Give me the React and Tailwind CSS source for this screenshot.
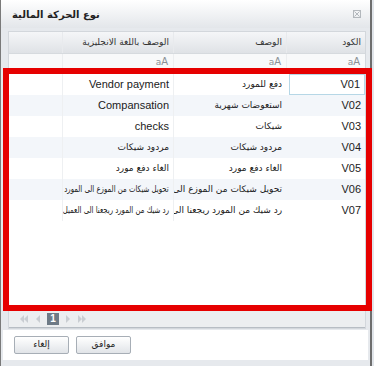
import React from "react";

const rows = [
  { code: "V01", ar: "دفع للمورد", en: "Vendor payment" },
  { code: "V02", ar: "استعوضات شهرية", en: "Compansation" },
  { code: "V03", ar: "شيكات", en: "checks" },
  { code: "V04", ar: "مردود شيكات", en: "مردود شيكات" },
  { code: "V05", ar: "الغاء دفع مورد", en: "الغاء دفع مورد" },
  { code: "V06", ar: "تحويل شيكات من الموزع الى المورد", en: "تحويل شيكات من الموزع الى المورد", long: true },
  { code: "V07", ar: "رد شيك من المورد ريجعنا الى العميل", en: "رد شيك من المورد ريجعنا الى العميل", long: true },
];

const isLatin = (s) => /^[A-Za-z ]+$/.test(s);

function FilterIcon() {
  return (
    <span className="text-[9px] leading-none text-[#8a8f96] font-['DejaVu_Sans',sans-serif]" dir="ltr">
      a<span className="text-[10px]">A</span>
    </span>
  );
}

function Cell({ text, w, squeeze = false }) {
  const latin = isLatin(text);
  return (
    <div className={`${w} h-full flex items-center justify-start pr-[4px] border-l border-[#eef0f2] overflow-hidden whitespace-nowrap`}>
      {latin ? (
        <span className="text-[11px] text-[#1a1a1a] font-['Liberation_Sans',sans-serif]">{text}</span>
      ) : squeeze ? (
        <span className="inline-block shrink-0 text-[9px] text-[#1a1a1a] origin-right scale-x-[0.77]">{text}</span>
      ) : (
        <span className="text-[9px] text-[#1a1a1a]">{text}</span>
      )}
    </div>
  );
}

export default function App() {
  return (
    <div className="w-[374px] h-[366px] bg-[#e1e5ea] overflow-hidden relative font-['DejaVu_Sans',sans-serif]">
      <div className="w-[372px] h-[366px] border-l border-l-[#7a7a7a] border-r-2 border-r-[#6e6e6e] bg-[#e6e9ed] flex flex-col">
        {/* title bar */}
        <div className="h-[28px] shrink-0 bg-gradient-to-b from-white to-[#e3e6ea] flex items-center justify-between pl-[11px] pr-[9px]">
          <span className="text-[10px] font-bold text-[#222]" dir="rtl">نوع الحركة المالية</span>
          <svg width="8" height="8" viewBox="0 0 8 8" className="opacity-70">
            <rect x="0.5" y="0.5" width="7" height="7" fill="none" stroke="#9aa0a6" strokeWidth="1" />
            <path d="M1.5 1.5 L6.5 6.5 M6.5 1.5 L1.5 6.5" stroke="#9aa0a6" strokeWidth="1" />
          </svg>
        </div>
        {/* body */}
        <div className="flex-1 flex flex-col pl-[7px] pr-[4px] pt-[3px]">
          <div className="h-[298px] border border-[#d3d7dc] bg-white flex flex-col" dir="rtl">
            {/* header */}
            <div className="h-[22px] shrink-0 flex bg-gradient-to-b from-[#f5f6f8] to-[#dfe2e6] border-b border-[#d6dade] text-[9px] text-[#333]">
              <div className="w-[79px] flex items-center pr-[4px] border-l border-[#e8eaed]">الكود</div>
              <div className="w-[113px] flex items-center pr-[4px] border-l border-[#e8eaed]">الوصف</div>
              <div className="w-[111px] flex items-center pr-[4px] border-l border-[#e8eaed]">الوصف باللغة الانجليزية</div>
              <div className="flex-1"></div>
            </div>
            {/* filter row */}
            <div className="h-[17px] shrink-0 flex bg-[#f8f9fa] border-b border-[#e3e6e9]">
              <div className="w-[79px] flex items-center pr-[5px] border-l border-[#eceef0]"><FilterIcon /></div>
              <div className="w-[113px] flex items-center pr-[5px] border-l border-[#eceef0]"><FilterIcon /></div>
              <div className="w-[111px] flex items-center pr-[5px] border-l border-[#eceef0]"><FilterIcon /></div>
              <div className="flex-1"></div>
            </div>
            {/* rows */}
            <div className="flex-1 flex flex-col pt-[3px]">
              {rows.map((r, i) => (
                <div key={r.code} className={`h-[21px] flex ${i % 2 === 1 ? "bg-[#f3f6fa]" : "bg-white"}`}>
                  <div className="w-[79px] h-full pl-[3px]">
                    <div
                      className={`h-full flex items-center justify-start pr-[4px] text-[11px] text-[#222] font-['Liberation_Sans',sans-serif] ${
                        i === 0 ? "border border-[#b6d7e6] bg-white" : ""
                      }`}
                    >
                      {r.code}
                    </div>
                  </div>
                  <Cell text={r.ar} w="w-[113px]" />
                  <Cell text={r.en} w="w-[111px]" squeeze={!!r.long} />
                  <div className="flex-1"></div>
                </div>
              ))}
            </div>
            {/* pager */}
            <div className="h-[17px] shrink-0 bg-[#eceef0] border-b border-[#b7bdc4] flex items-center gap-[6px] pl-[10px]" dir="ltr">
              <svg width="10" height="8" viewBox="0 0 10 8"><path d="M5 0 L1 4 L5 8Z M9 0 L5 4 L9 8Z" fill="#c9cdd2" /></svg>
              <svg width="6" height="8" viewBox="0 0 6 8"><path d="M5 0 L1 4 L5 8Z" fill="#c9cdd2" /></svg>
              <div className="w-[12px] h-[12px] bg-[#6e7a86] text-white text-[10px] font-bold flex items-center justify-center leading-none font-['Liberation_Sans',sans-serif]">1</div>
              <svg width="6" height="8" viewBox="0 0 6 8"><path d="M1 0 L5 4 L1 8Z" fill="#c9cdd2" /></svg>
              <svg width="10" height="8" viewBox="0 0 10 8"><path d="M1 0 L5 4 L1 8Z M5 0 L9 4 L5 8Z" fill="#c9cdd2" /></svg>
            </div>
          </div>
        </div>
        {/* buttons */}
        <div className="h-[30px] shrink-0 mx-[2px] bg-white flex items-center gap-[7px] pl-[11px] mb-[6px]">
          <button className="w-[55px] h-[18px] rounded-[2px] border border-[#a7aeb6] bg-gradient-to-b from-white to-[#e1e4e8] text-[9px] text-[#222]">إلغاء</button>
          <button className="w-[55px] h-[18px] rounded-[2px] border border-[#a7aeb6] bg-gradient-to-b from-white to-[#e1e4e8] text-[9px] text-[#222]">موافق</button>
        </div>
      </div>
      {/* red annotation rectangle */}
      <div className="absolute left-[3px] top-[68px] w-[369px] h-[243px] border-[6px] border-[#e60000] pointer-events-none"></div>
    </div>
  );
}
